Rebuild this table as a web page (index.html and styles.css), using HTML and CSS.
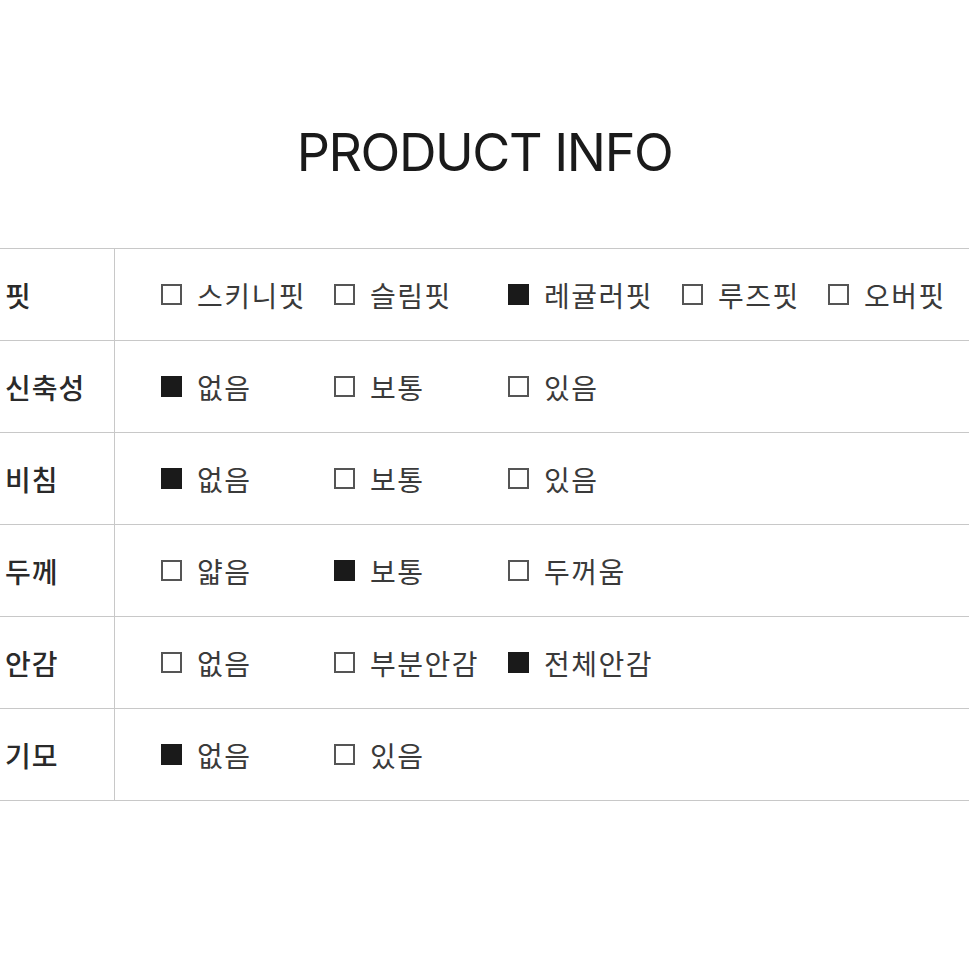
FILE: index.html
```html
<!DOCTYPE html>
<html lang="ko">
<head>
<meta charset="utf-8">
<title>Product Info</title>
<link rel="stylesheet" href="styles.css">
</head>
<body>
<h1 class="title">PRODUCT INFO</h1>
<div class="table">
  <div class="row">
    <div class="label">핏</div>
    <div class="opts">
      <span class="opt"><i class="box"></i>스키니핏</span>
      <span class="opt"><i class="box"></i>슬림핏</span>
      <span class="opt"><i class="box on"></i>레귤러핏</span>
      <span class="opt"><i class="box"></i>루즈핏</span>
      <span class="opt"><i class="box"></i>오버핏</span>
    </div>
  </div>
  <div class="row">
    <div class="label">신축성</div>
    <div class="opts">
      <span class="opt"><i class="box on"></i>없음</span>
      <span class="opt"><i class="box"></i>보통</span>
      <span class="opt"><i class="box"></i>있음</span>
    </div>
  </div>
  <div class="row">
    <div class="label">비침</div>
    <div class="opts">
      <span class="opt"><i class="box on"></i>없음</span>
      <span class="opt"><i class="box"></i>보통</span>
      <span class="opt"><i class="box"></i>있음</span>
    </div>
  </div>
  <div class="row">
    <div class="label">두께</div>
    <div class="opts">
      <span class="opt"><i class="box"></i>얇음</span>
      <span class="opt"><i class="box on"></i>보통</span>
      <span class="opt"><i class="box"></i>두꺼움</span>
    </div>
  </div>
  <div class="row">
    <div class="label">안감</div>
    <div class="opts">
      <span class="opt"><i class="box"></i>없음</span>
      <span class="opt"><i class="box"></i>부분안감</span>
      <span class="opt"><i class="box on"></i>전체안감</span>
    </div>
  </div>
  <div class="row">
    <div class="label">기모</div>
    <div class="opts">
      <span class="opt"><i class="box on"></i>없음</span>
      <span class="opt"><i class="box"></i>있음</span>
    </div>
  </div>
</div>
</body>
</html>
```
FILE: styles.css
```css
html, body {
  margin: 0;
  padding: 0;
  background: #fff;
}
body {
  font-family: "Noto Sans CJK KR", "Noto Sans", sans-serif;
  color: #222;
}
.title {
  margin: 0;
  padding-top: 121px;
  height: 248px;
  box-sizing: border-box;
  text-align: center;
  font-family: Inter, "Noto Sans", sans-serif;
  font-weight: 400;
  font-size: 52px;
  line-height: 64px;
  letter-spacing: -1.4px;
  color: #1a1a1a;
}
.table {
  border-top: 1px solid #c8c8c8;
}
.row {
  display: grid;
  grid-template-columns: 115px 1fr;
  height: 92px;
  box-sizing: border-box;
  border-bottom: 1px solid #c8c8c8;
}
.label {
  display: flex;
  align-items: center;
  padding-left: 5px;
  border-right: 1px solid #c8c8c8;
  font-size: 28px;
  letter-spacing: 1px;
  font-weight: 500;
  color: #2a2a2a;
}
.opts {
  display: grid;
  grid-template-columns: 173px 174px 174px 146px auto;
  align-items: center;
  padding-left: 46px;
  font-size: 28px;
  letter-spacing: 1.5px;
  font-weight: 400;
  color: #3a3a3a;
  white-space: nowrap;
}
.opt {
  display: flex;
  align-items: center;
}
.box {
  display: inline-block;
  width: 21px;
  height: 21px;
  box-sizing: border-box;
  border: 2px solid #555;
  margin-right: 15px;
  flex: none;
}
.box.on {
  background: #1a1a1a;
  border-color: #1a1a1a;
}
```
